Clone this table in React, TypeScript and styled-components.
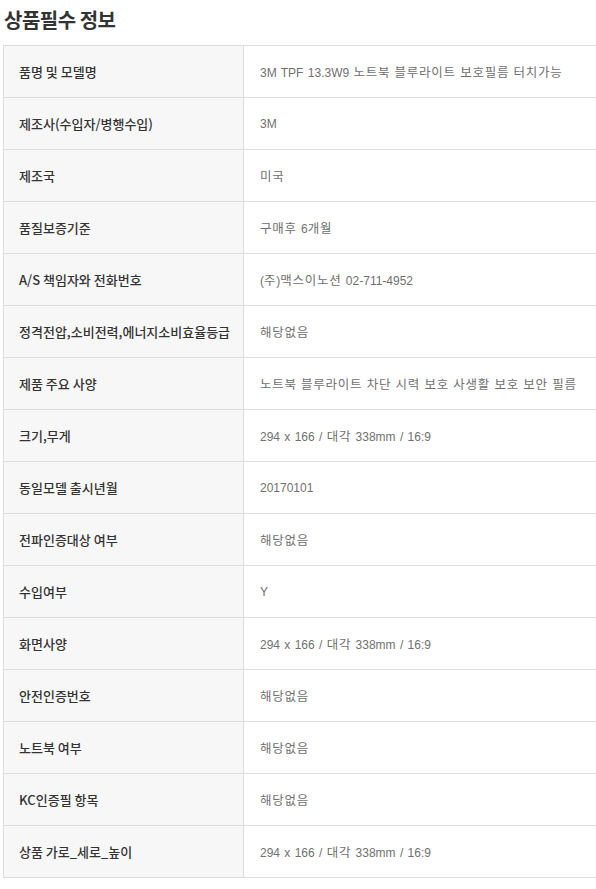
import styled, { createGlobalStyle } from "styled-components";

const GlobalStyle = createGlobalStyle`
  body {
    margin: 0;
    background: #fff;
    font-family: "Noto Sans CJK KR", "Noto Sans", sans-serif;
  }
`;

const Wrapper = styled.div`
  width: 596px;
  overflow: hidden;
`;

const Title = styled.h2`
  margin: 0;
  padding: 4px 0 0 4px;
  height: 45px;
  box-sizing: border-box;
  font-size: 20px;
  line-height: 32px;
  font-weight: 700;
  color: #333;
  letter-spacing: -0.5px;
`;

const Table = styled.table`
  margin-left: 3px;
  width: 620px;
  border-collapse: collapse;
  table-layout: fixed;
`;

const LabelCol = styled.col`
  width: 240px;
`;

const Row = styled.tr`
  height: 52px;
`;

const Label = styled.th`
  padding: 0 0 0 15px;
  border: 1px solid #dcdcdc;
  background: #f7f7f7;
  text-align: left;
  font-size: 13px;
  font-weight: 500;
  color: #333;
`;

const Value = styled.td`
  padding: 0 0 0 16px;
  border: 1px solid #dcdcdc;
  font-family: "Liberation Sans", "Noto Sans CJK KR", sans-serif;
  font-size: 12px;
  word-spacing: 1px;
  color: #707070;
`;

const Hangul = styled.span`
  font-family: "Noto Sans CJK KR", sans-serif;
  font-size: 12.5px;
  letter-spacing: 0.75px;
`;

const items: [string, string][] = [
  ["품명 및 모델명", "3M TPF 13.3W9 노트북 블루라이트 보호필름 터치가능"],
  ["제조사(수입자/병행수입)", "3M"],
  ["제조국", "미국"],
  ["품질보증기준", "구매후 6개월"],
  ["A/S 책임자와 전화번호", "(주)맥스이노션 02-711-4952"],
  ["정격전압,소비전력,에너지소비효율등급", "해당없음"],
  ["제품 주요 사양", "노트북 블루라이트 차단 시력 보호 사생활 보호 보안 필름"],
  ["크기,무게", "294 x 166 / 대각 338mm / 16:9"],
  ["동일모델 출시년월", "20170101"],
  ["전파인증대상 여부", "해당없음"],
  ["수입여부", "Y"],
  ["화면사양", "294 x 166 / 대각 338mm / 16:9"],
  ["안전인증번호", "해당없음"],
  ["노트북 여부", "해당없음"],
  ["KC인증필 항목", "해당없음"],
  ["상품 가로_세로_높이", "294 x 166 / 대각 338mm / 16:9"],
];

function splitText(text: string) {
  return text.split(/([\uAC00-\uD7A3]+)/).map((part, i) =>
    /[\uAC00-\uD7A3]/.test(part) ? <Hangul key={i}>{part}</Hangul> : part
  );
}

export default function App() {
  return (
    <Wrapper>
      <GlobalStyle />
      <Title>상품필수 정보</Title>
      <Table>
        <colgroup>
          <LabelCol />
          <col />
        </colgroup>
        <tbody>
          {items.map(([label, value]) => (
            <Row key={label}>
              <Label>{label}</Label>
              <Value>{splitText(value)}</Value>
            </Row>
          ))}
        </tbody>
      </Table>
    </Wrapper>
  );
}
